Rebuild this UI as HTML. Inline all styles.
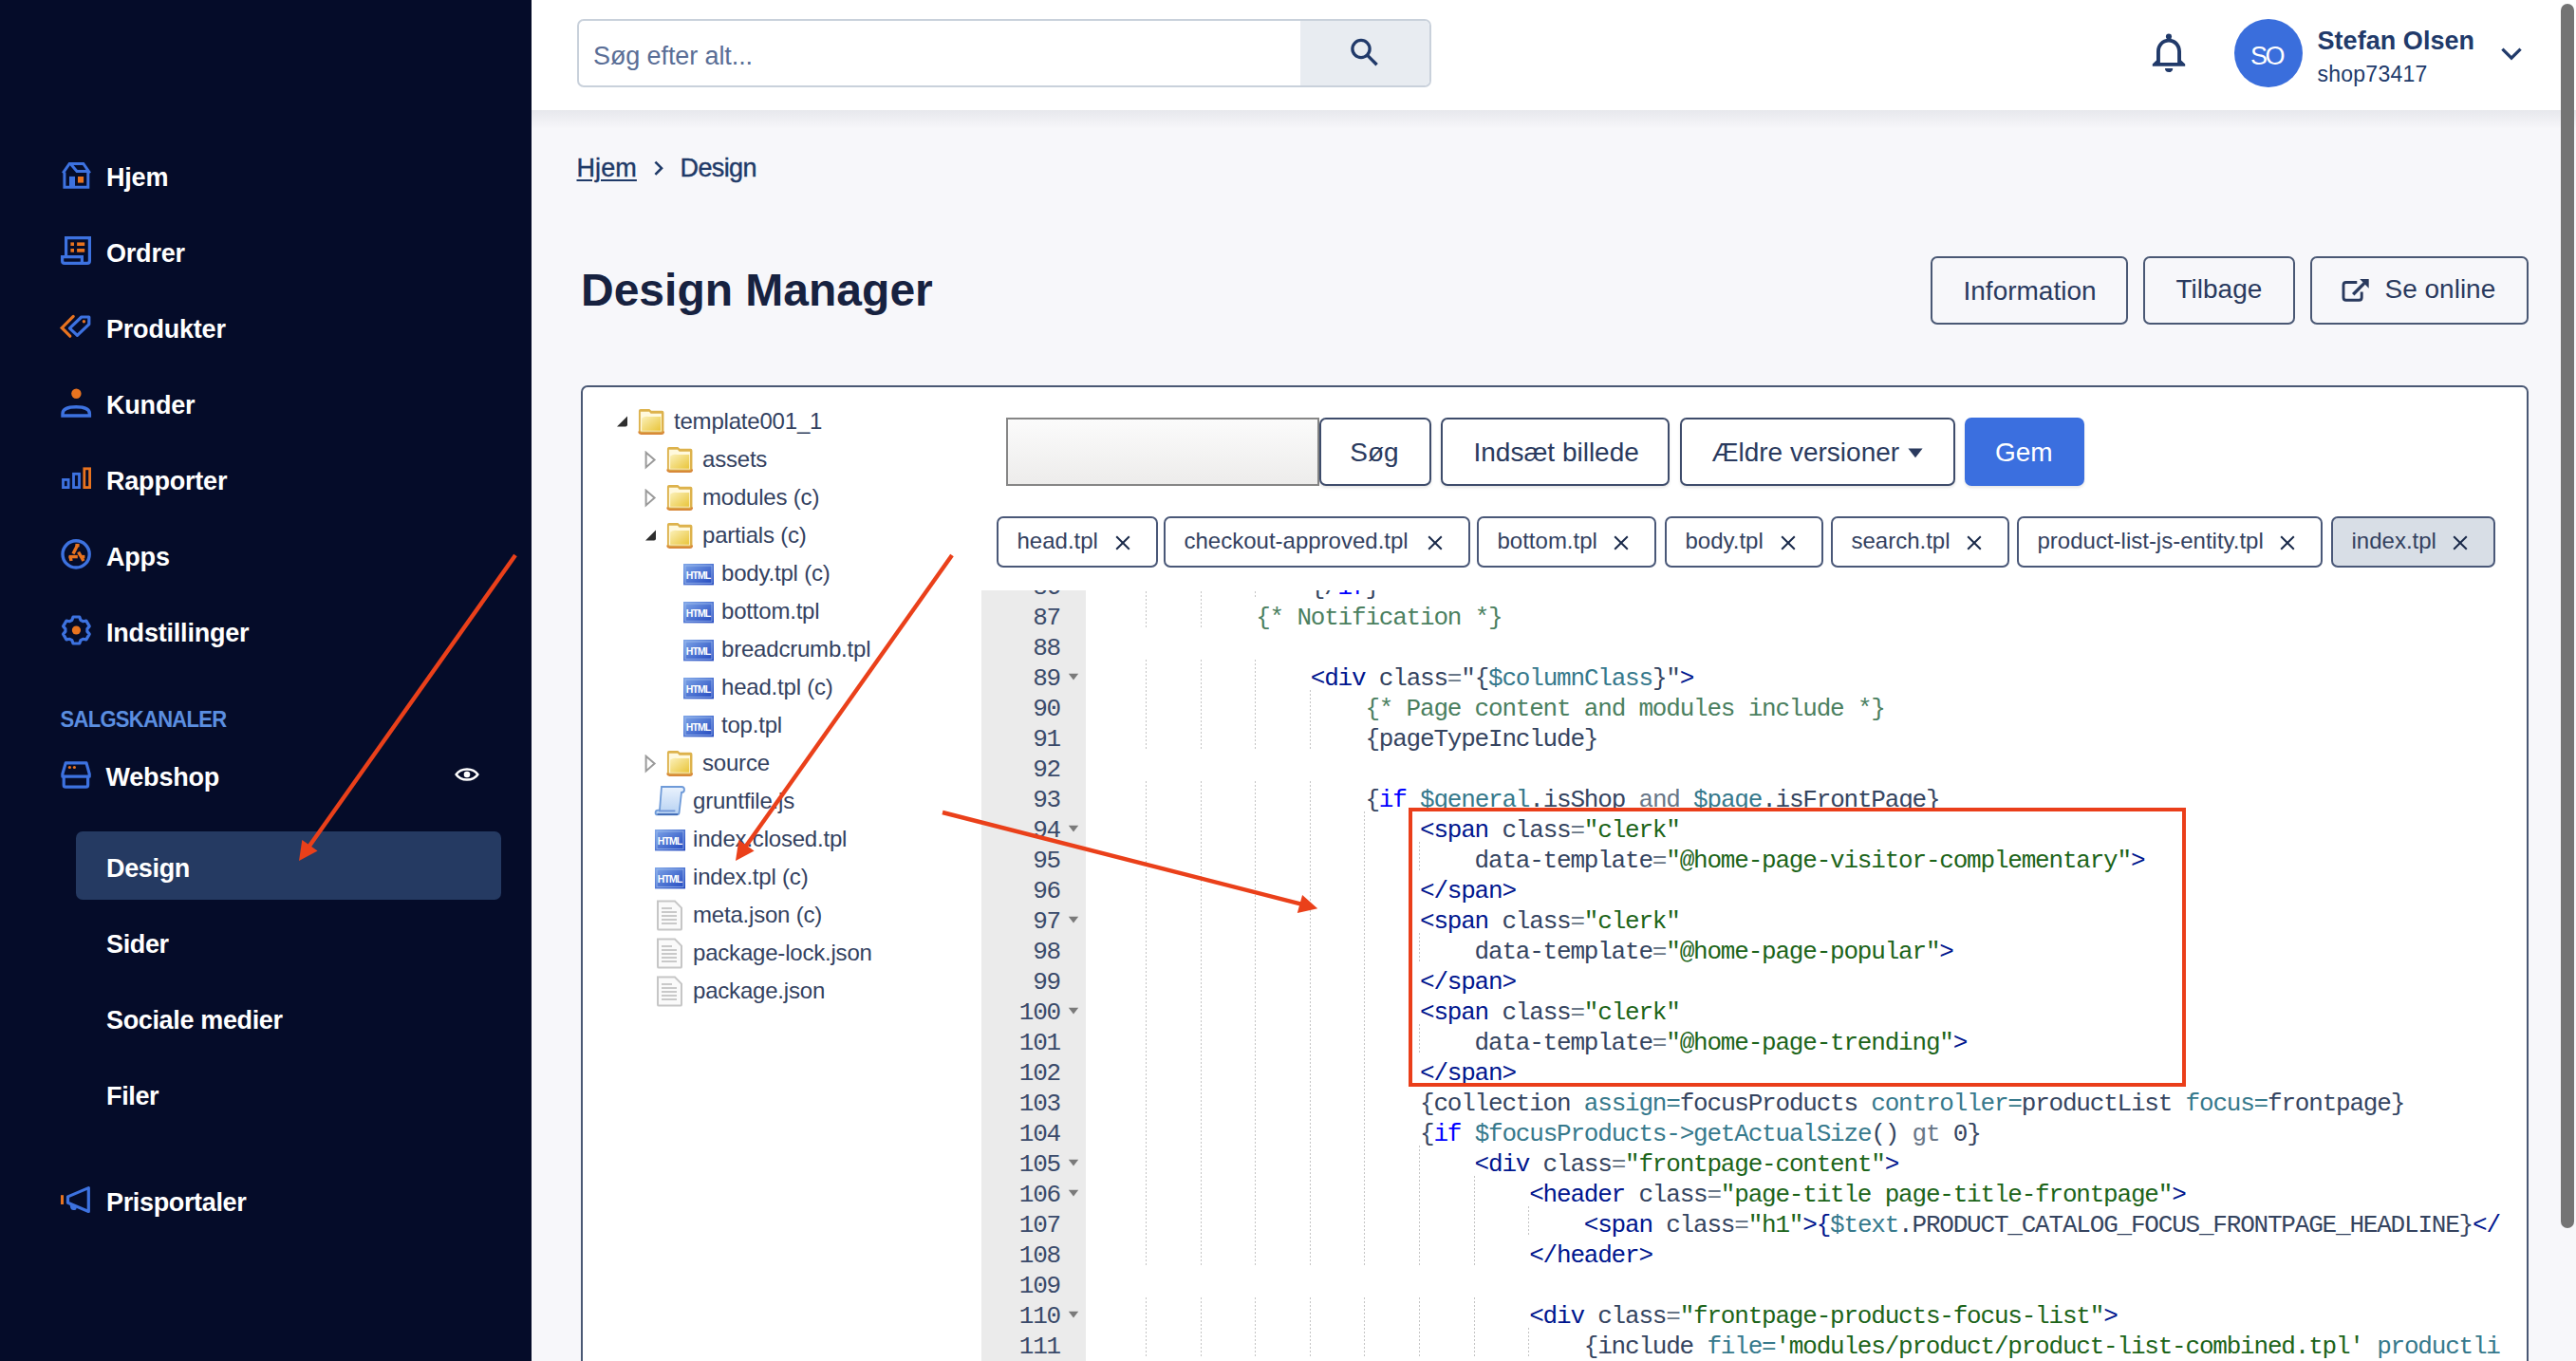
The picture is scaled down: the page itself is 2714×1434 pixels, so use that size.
<!DOCTYPE html>
<html><head><meta charset="utf-8"><style>
html,body{margin:0;padding:0;}
body{width:2714px;height:1434px;overflow:hidden;position:relative;background:#F7F7FA;}
.r{position:absolute;}
.t{position:absolute;white-space:pre;line-height:1;}
.cd{font-family:'Liberation Mono';font-size:26px;letter-spacing:-1.2px;}
.gn{right:27px;color:#3A4A6A;text-align:right;}
.g{position:absolute;width:1px;height:32px;background:repeating-linear-gradient(#C4C4C4 0 2px,transparent 2px 4px);}
</style></head><body>
<div class="r" style="left:0px;top:0px;width:560px;height:1434px;background:#050C29"></div>
<div class="t" style="left:112.0px;top:174px;font-family:'Liberation Sans';font-weight:bold;font-size:27px;color:#FFFFFF;letter-spacing:-0.2px;">Hjem</div>
<div class="t" style="left:112.0px;top:254px;font-family:'Liberation Sans';font-weight:bold;font-size:27px;color:#FFFFFF;letter-spacing:-0.2px;">Ordrer</div>
<div class="t" style="left:112.0px;top:334px;font-family:'Liberation Sans';font-weight:bold;font-size:27px;color:#FFFFFF;letter-spacing:-0.2px;">Produkter</div>
<div class="t" style="left:112.0px;top:414px;font-family:'Liberation Sans';font-weight:bold;font-size:27px;color:#FFFFFF;letter-spacing:-0.2px;">Kunder</div>
<div class="t" style="left:112.0px;top:494px;font-family:'Liberation Sans';font-weight:bold;font-size:27px;color:#FFFFFF;letter-spacing:-0.2px;">Rapporter</div>
<div class="t" style="left:112.0px;top:574px;font-family:'Liberation Sans';font-weight:bold;font-size:27px;color:#FFFFFF;letter-spacing:-0.2px;">Apps</div>
<div class="t" style="left:112.0px;top:654px;font-family:'Liberation Sans';font-weight:bold;font-size:27px;color:#FFFFFF;letter-spacing:-0.2px;">Indstillinger</div>
<div class="t" style="left:63.5px;top:748px;font-family:'Liberation Sans';font-weight:bold;font-size:22px;color:#5B8EE0;letter-spacing:-0.7px;transform:scaleY(1.12);transform-origin:0 18px;">SALGSKANALER</div>
<div class="t" style="left:111.5px;top:806px;font-family:'Liberation Sans';font-weight:bold;font-size:27px;color:#FFFFFF;letter-spacing:-0.2px;">Webshop</div>
<div class="r" style="left:80px;top:876px;width:448px;height:72px;background:#253A62;border-radius:7px"></div>
<div class="t" style="left:112.0px;top:902px;font-family:'Liberation Sans';font-weight:bold;font-size:27px;color:#FFFFFF;letter-spacing:-0.35px;">Design</div>
<div class="t" style="left:112.0px;top:982px;font-family:'Liberation Sans';font-weight:bold;font-size:27px;color:#FFFFFF;letter-spacing:-0.35px;">Sider</div>
<div class="t" style="left:112.0px;top:1062px;font-family:'Liberation Sans';font-weight:bold;font-size:27px;color:#FFFFFF;letter-spacing:-0.35px;">Sociale medier</div>
<div class="t" style="left:112.0px;top:1142px;font-family:'Liberation Sans';font-weight:bold;font-size:27px;color:#FFFFFF;letter-spacing:-0.35px;">Filer</div>
<div class="t" style="left:112.0px;top:1254px;font-family:'Liberation Sans';font-weight:bold;font-size:27px;color:#FFFFFF;letter-spacing:-0.35px;">Prisportaler</div>
<svg class="r" style="left:0;top:0" width="560" height="1434" viewBox="0 0 560 1434">
<g fill="none" stroke="#3D72E0" stroke-width="3">
 <path d="M67.9 181.6 V197.3 H92.8 V181.6"/>
 <path d="M66.3 182.4 L73.2 172.4 H87.8 L94.7 182.4" stroke-linejoin="miter"/>
 <path d="M74.4 172.8 L81 180.4 H93.6"/>
</g>
<rect x="73" y="185.9" width="6" height="12" fill="#3D72E0"/>
<rect x="82" y="186" width="6.1" height="6.6" fill="#E8731F"/>
<!-- Ordrer -->
<g fill="none" stroke="#3D72E0" stroke-width="3.2">
 <path d="M69.6 270 V250.6 H94.4 V275 Q94.4 277.4 92 277.4 H68 Q65.6 277.4 65.6 275 V270.6 H86.4 V277"/>
</g>
<g fill="#E8731F"><rect x="74.4" y="255.4" width="3.6" height="3.6"/><rect x="81.1" y="255.4" width="8.1" height="3.6"/><rect x="74.4" y="262" width="3.6" height="3.7"/><rect x="81.1" y="262" width="8.1" height="3.7"/></g>
<!-- Produkter -->
<path d="M77.2 333.4 L65.2 345.4 L73.8 354.2" fill="none" stroke="#E8731F" stroke-width="3.2" stroke-linecap="round"/>
<path d="M85.8 334 H93.8 V341.6 L81.4 353.4 L73.4 345.8 Z" fill="none" stroke="#3D72E0" stroke-width="3.2" stroke-linejoin="round"/>
<circle cx="88.4" cy="338.8" r="1.7" fill="#E8731F"/>
<!-- Kunder -->
<circle cx="80.4" cy="414.8" r="5.2" fill="#E8731F"/>
<path d="M66 438 V436 Q66 428.8 80.2 428.8 Q94.4 428.8 94.4 436 V438 Z" fill="none" stroke="#3D72E0" stroke-width="3.4"/>
<!-- Rapporter -->
<g fill="none" stroke-width="2.8">
 <rect x="66.5" y="505.4" width="5.6" height="8.2" stroke="#3D72E0"/>
 <rect x="77.5" y="499.3" width="6" height="14.3" stroke="#3D72E0"/>
 <rect x="88.8" y="493.8" width="5.8" height="19.8" stroke="#E8731F"/>
</g>
<!-- Apps -->
<circle cx="80.1" cy="583.9" r="14.1" fill="none" stroke="#3D72E0" stroke-width="3.4"/>
<g stroke="#E8731F" stroke-width="3.4" fill="none" stroke-linecap="butt">
 <path d="M81.6 574.4 L77 583.6"/><path d="M72.6 586.6 H81.8"/><path d="M82.6 581.6 L88 591"/>
 <path d="M79.4 574.6 L83.6 574.6"/><path d="M74 586 L75 591"/><path d="M86 586.6 H89.4"/>
</g>
<!-- Indstillinger -->
<path d="M75.87 653.32 L77.04 650.00 L83.76 650.00 L84.93 653.32 L87.38 654.74 L90.85 654.09 L94.21 659.91 L91.91 662.59 L91.91 665.41 L94.21 668.09 L90.85 673.91 L87.38 673.26 L84.93 674.68 L83.76 678.00 L77.04 678.00 L75.87 674.68 L73.42 673.26 L69.95 673.91 L66.59 668.09 L68.89 665.41 L68.89 662.59 L66.59 659.91 L69.95 654.09 L73.42 654.74 Z" fill="none" stroke="#3D72E0" stroke-width="3.2" stroke-linejoin="round"/>
<circle cx="80.4" cy="664" r="4.6" fill="#E8731F"/>
<!-- Webshop -->
<path d="M69.2 803.9 H91 L94.2 815.4 V818.2 H65.9 V815.4 Z" fill="none" stroke="#3D72E0" stroke-width="3.2" stroke-linejoin="round"/>
<path d="M67.2 818.2 V827.2 Q67.2 829.2 69.2 829.2 H90.6 Q92.6 829.2 92.6 827.2 V818.2" fill="none" stroke="#3D72E0" stroke-width="3.2"/>
<circle cx="73.4" cy="808.5" r="1.6" fill="#E8731F"/><circle cx="78.4" cy="808.5" r="1.6" fill="#E8731F"/>
<!-- Megaphone -->
<rect x="64" y="1259.2" width="3" height="9.8" fill="#E8731F"/>
<path d="M93.3 1251.6 V1276.5 L71.5 1267.2 V1260.9 Z" fill="none" stroke="#3D72E0" stroke-width="3.2" stroke-linejoin="round"/>
<path d="M73.4 1268 L74.2 1272.6 Q74.6 1275 77 1275 H78.8 Q80.6 1275 80.6 1273 V1270.8 Z" fill="#3D72E0"/>
<!-- eye -->
<path d="M480.6 816 C485.6 808.6 498.4 808.6 503.4 816 C498.4 823.4 485.6 823.4 480.6 816 Z" fill="none" stroke="#FFFFFF" stroke-width="2.4"/>
<circle cx="492" cy="816" r="3.3" fill="#FFFFFF"/>
</svg>
<div class="r" style="left:560px;top:0px;width:2154px;height:116px;background:#FFFFFF"></div>
<div class="r" style="left:560px;top:116px;width:2154px;height:20px;background:linear-gradient(rgba(20,30,60,0.07),rgba(20,30,60,0))"></div>
<div class="r" style="left:608px;top:20px;width:900px;height:72px;background:#fff;border:2px solid #C9D1DB;border-radius:7px;box-sizing:border-box"></div>
<div class="r" style="left:1370px;top:22px;width:136px;height:68px;background:#E8ECF1;border-radius:0 5px 5px 0"></div>
<div class="t" style="left:625.0px;top:46px;font-family:'Liberation Sans';font-weight:normal;font-size:27px;color:#5A6E96;letter-spacing:-0.1px;">Søg efter alt...</div>
<svg class="r" style="left:1400px;top:20px" width="80" height="72" viewBox="1400 20 80 72">
<circle cx="1434" cy="51.5" r="9.1" fill="none" stroke="#213A6A" stroke-width="3.3"/>
<path d="M1440.8 58.4 L1450.6 68.2" stroke="#213A6A" stroke-width="3.4" stroke-linecap="butt"/>
</svg>
<svg class="r" style="left:2260px;top:30px" width="50" height="52" viewBox="2260 30 50 52">
<path fill-rule="evenodd" fill="#213A6A" d="M2285 40.7 C2292.6 40.7 2298 46.6 2298 54.2 V63.4 L2302.2 67.6 V69.8 H2267.8 V67.6 L2272 63.4 V54.2 C2272 46.6 2277.4 40.7 2285 40.7 Z M2285 44.6 C2290.3 44.6 2294.1 48.8 2294.1 54.2 V65.9 H2275.9 V54.2 C2275.9 48.8 2279.7 44.6 2285 44.6 Z"/>
<circle cx="2285" cy="38.6" r="3.1" fill="#213A6A"/>
<path d="M2281 72 H2289.2 Q2289.2 76 2285.1 76 Q2281 76 2281 72 Z" fill="#213A6A"/>
</svg>
<div class="r" style="left:2354px;top:20px;width:72px;height:72px;border-radius:50%;background:#3A6EDC"></div>
<div class="t" style="left:2371.0px;top:46px;font-family:'Liberation Sans';font-weight:normal;font-size:27px;color:#FFFFFF;letter-spacing:-2.6px;">SO</div>
<div class="t" style="left:2441.5px;top:30px;font-family:'Liberation Sans';font-weight:bold;font-size:27px;color:#213A6A;letter-spacing:0.05px;">Stefan Olsen</div>
<div class="t" style="left:2441.5px;top:67px;font-family:'Liberation Sans';font-weight:normal;font-size:23px;color:#213A6A;letter-spacing:0.25px;">shop73417</div>
<svg class="r" style="left:2630px;top:44px" width="32" height="26" viewBox="2630 44 32 26">
<path d="M2636.4 51.6 L2646 61.2 L2655.6 51.6" fill="none" stroke="#213A6A" stroke-width="3.2"/>
</svg>
<div class="t" style="left:607.5px;top:164px;font-family:'Liberation Sans';font-weight:normal;font-size:27px;color:#1F3A68;letter-spacing:0.1px;-webkit-text-stroke:0.4px #1F3A68;text-decoration:underline;text-decoration-thickness:2px;text-underline-offset:3px;">Hjem</div>
<svg class="r" style="left:684px;top:164px" width="20" height="26" viewBox="684 164 20 26">
<path d="M690.4 170.6 L697 177.2 L690.4 183.8" fill="none" stroke="#1F3A68" stroke-width="2.6"/>
</svg>
<div class="t" style="left:716.5px;top:164px;font-family:'Liberation Sans';font-weight:normal;font-size:27px;color:#1F3A68;letter-spacing:-0.6px;-webkit-text-stroke:0.4px #1F3A68;">Design</div>
<div class="t" style="left:612.0px;top:282px;font-family:'Liberation Sans';font-weight:bold;font-size:48px;color:#172240;">Design Manager</div>
<div class="r" style="left:2034px;top:270px;width:208px;height:72px;background:transparent;border:2px solid #4A5874;border-radius:7px;box-sizing:border-box;"></div>
<div class="t" style="left:2068.5px;top:293px;font-family:'Liberation Sans';font-weight:normal;font-size:28px;color:#2A3A5E;">Information</div>
<div class="r" style="left:2258px;top:270px;width:160px;height:72px;background:transparent;border:2px solid #4A5874;border-radius:7px;box-sizing:border-box;"></div>
<div class="t" style="left:2292.5px;top:291px;font-family:'Liberation Sans';font-weight:normal;font-size:28px;color:#2A3A5E;">Tilbage</div>
<div class="r" style="left:2434px;top:270px;width:230px;height:72px;background:transparent;border:2px solid #4A5874;border-radius:7px;box-sizing:border-box;"></div>
<svg class="r" style="left:2460px;top:288px" width="40" height="36" viewBox="2460 288 40 36">
<path d="M2488.2 307.6 V313.4 Q2488.2 316.2 2485.4 316.2 H2471.8 Q2469 316.2 2469 313.4 V300.3 Q2469 297.5 2471.8 297.5 H2483.3" fill="none" stroke="#2A3A5E" stroke-width="2.9"/>
<path d="M2479.2 310.2 L2491 298.4" stroke="#2A3A5E" stroke-width="3.4"/>
<path d="M2486.2 294 H2495.7 V303.7 Z" fill="#2A3A5E"/>
</svg>
<div class="t" style="left:2512.5px;top:291px;font-family:'Liberation Sans';font-weight:normal;font-size:28px;color:#2A3A5E;">Se online</div>
<div class="r" style="left:612px;top:406px;width:2052px;height:1054px;background:#FFFFFF;border:2px solid #4A5874;border-radius:7px;box-sizing:border-box"></div>
<svg class="r" style="left:649px;top:436.5px" width="14" height="14" viewBox="0 0 14 14"><path d="M1 12.5 L12 1.5 V10.5 Q12 12.5 10 12.5 Z" fill="#2E2E2E"/></svg>
<svg class="r" style="left:672px;top:430px" width="28.4" height="28.4" viewBox="0 0 30 30">
<defs><linearGradient id="fg672430" x1="0" y1="0" x2="1" y2="1"><stop offset="0" stop-color="#FBF0B8"/><stop offset="1" stop-color="#E9C53A"/></linearGradient></defs>
<path d="M1 3 Q1 1 3 1 H13 L15 3 H27 Q29 3 29 5 V26 Q29 28.5 26.5 28.5 H3.5 Q1 28.5 1 26 Z" fill="#DDB24C"/>
<path d="M3 4 H12.6 L14.4 6 H26.4 V26 H3 Z" fill="#FFF9DD"/>
<path d="M4.4 11 Q8 8.6 12 9.6 H25.6 V25.2 H4.4 Z" fill="url(#fg672430)"/>
<path d="M1.4 26 Q1.4 28.4 3.6 28.4 H26.4 Q28.6 28.4 28.6 26" fill="none" stroke="#D8893A" stroke-width="2.2"/>
</svg>
<div class="t" style="left:710.0px;top:432px;font-family:'Liberation Sans';font-weight:normal;font-size:24px;color:#33415F;letter-spacing:-0.2px;">template001_1</div>
<svg class="r" style="left:679px;top:475px" width="14" height="20" viewBox="0 0 14 20"><path d="M1.6 1.8 L10.6 9.6 L1.6 17.4 Z" fill="none" stroke="#9A9A9A" stroke-width="2"/></svg>
<svg class="r" style="left:702px;top:470px" width="28.4" height="28.4" viewBox="0 0 30 30">
<defs><linearGradient id="fg702470" x1="0" y1="0" x2="1" y2="1"><stop offset="0" stop-color="#FBF0B8"/><stop offset="1" stop-color="#E9C53A"/></linearGradient></defs>
<path d="M1 3 Q1 1 3 1 H13 L15 3 H27 Q29 3 29 5 V26 Q29 28.5 26.5 28.5 H3.5 Q1 28.5 1 26 Z" fill="#DDB24C"/>
<path d="M3 4 H12.6 L14.4 6 H26.4 V26 H3 Z" fill="#FFF9DD"/>
<path d="M4.4 11 Q8 8.6 12 9.6 H25.6 V25.2 H4.4 Z" fill="url(#fg702470)"/>
<path d="M1.4 26 Q1.4 28.4 3.6 28.4 H26.4 Q28.6 28.4 28.6 26" fill="none" stroke="#D8893A" stroke-width="2.2"/>
</svg>
<div class="t" style="left:740.0px;top:472px;font-family:'Liberation Sans';font-weight:normal;font-size:24px;color:#33415F;letter-spacing:-0.2px;">assets</div>
<svg class="r" style="left:679px;top:515px" width="14" height="20" viewBox="0 0 14 20"><path d="M1.6 1.8 L10.6 9.6 L1.6 17.4 Z" fill="none" stroke="#9A9A9A" stroke-width="2"/></svg>
<svg class="r" style="left:702px;top:510px" width="28.4" height="28.4" viewBox="0 0 30 30">
<defs><linearGradient id="fg702510" x1="0" y1="0" x2="1" y2="1"><stop offset="0" stop-color="#FBF0B8"/><stop offset="1" stop-color="#E9C53A"/></linearGradient></defs>
<path d="M1 3 Q1 1 3 1 H13 L15 3 H27 Q29 3 29 5 V26 Q29 28.5 26.5 28.5 H3.5 Q1 28.5 1 26 Z" fill="#DDB24C"/>
<path d="M3 4 H12.6 L14.4 6 H26.4 V26 H3 Z" fill="#FFF9DD"/>
<path d="M4.4 11 Q8 8.6 12 9.6 H25.6 V25.2 H4.4 Z" fill="url(#fg702510)"/>
<path d="M1.4 26 Q1.4 28.4 3.6 28.4 H26.4 Q28.6 28.4 28.6 26" fill="none" stroke="#D8893A" stroke-width="2.2"/>
</svg>
<div class="t" style="left:740.0px;top:512px;font-family:'Liberation Sans';font-weight:normal;font-size:24px;color:#33415F;letter-spacing:-0.2px;">modules (c)</div>
<svg class="r" style="left:679px;top:556.5px" width="14" height="14" viewBox="0 0 14 14"><path d="M1 12.5 L12 1.5 V10.5 Q12 12.5 10 12.5 Z" fill="#2E2E2E"/></svg>
<svg class="r" style="left:702px;top:550px" width="28.4" height="28.4" viewBox="0 0 30 30">
<defs><linearGradient id="fg702550" x1="0" y1="0" x2="1" y2="1"><stop offset="0" stop-color="#FBF0B8"/><stop offset="1" stop-color="#E9C53A"/></linearGradient></defs>
<path d="M1 3 Q1 1 3 1 H13 L15 3 H27 Q29 3 29 5 V26 Q29 28.5 26.5 28.5 H3.5 Q1 28.5 1 26 Z" fill="#DDB24C"/>
<path d="M3 4 H12.6 L14.4 6 H26.4 V26 H3 Z" fill="#FFF9DD"/>
<path d="M4.4 11 Q8 8.6 12 9.6 H25.6 V25.2 H4.4 Z" fill="url(#fg702550)"/>
<path d="M1.4 26 Q1.4 28.4 3.6 28.4 H26.4 Q28.6 28.4 28.6 26" fill="none" stroke="#D8893A" stroke-width="2.2"/>
</svg>
<div class="t" style="left:740.0px;top:552px;font-family:'Liberation Sans';font-weight:normal;font-size:24px;color:#33415F;letter-spacing:-0.2px;">partials (c)</div>
<svg class="r" style="left:720px;top:594px" width="32" height="23" viewBox="0 0 32 23">
<defs><linearGradient id="hg720594" x1="0" y1="0" x2="1" y2="1"><stop offset="0" stop-color="#7FA6E8"/><stop offset="1" stop-color="#1F45BE"/></linearGradient></defs>
<rect x="0" y="0" width="32" height="22.4" fill="url(#hg720594)"/>
<rect x="2" y="2" width="28" height="18.4" fill="none" stroke="#A9C3F0" stroke-width="1" opacity="0.7"/>
<text x="15.6" y="16.2" text-anchor="middle" font-family="Liberation Sans" font-weight="bold" font-size="10.5" fill="#FFFFFF" letter-spacing="-0.9" transform="scale(1,1.05) translate(0,-0.8)">HTML</text>
</svg>
<div class="t" style="left:760.0px;top:592px;font-family:'Liberation Sans';font-weight:normal;font-size:24px;color:#33415F;letter-spacing:-0.2px;">body.tpl (c)</div>
<svg class="r" style="left:720px;top:634px" width="32" height="23" viewBox="0 0 32 23">
<defs><linearGradient id="hg720634" x1="0" y1="0" x2="1" y2="1"><stop offset="0" stop-color="#7FA6E8"/><stop offset="1" stop-color="#1F45BE"/></linearGradient></defs>
<rect x="0" y="0" width="32" height="22.4" fill="url(#hg720634)"/>
<rect x="2" y="2" width="28" height="18.4" fill="none" stroke="#A9C3F0" stroke-width="1" opacity="0.7"/>
<text x="15.6" y="16.2" text-anchor="middle" font-family="Liberation Sans" font-weight="bold" font-size="10.5" fill="#FFFFFF" letter-spacing="-0.9" transform="scale(1,1.05) translate(0,-0.8)">HTML</text>
</svg>
<div class="t" style="left:760.0px;top:632px;font-family:'Liberation Sans';font-weight:normal;font-size:24px;color:#33415F;letter-spacing:-0.2px;">bottom.tpl</div>
<svg class="r" style="left:720px;top:674px" width="32" height="23" viewBox="0 0 32 23">
<defs><linearGradient id="hg720674" x1="0" y1="0" x2="1" y2="1"><stop offset="0" stop-color="#7FA6E8"/><stop offset="1" stop-color="#1F45BE"/></linearGradient></defs>
<rect x="0" y="0" width="32" height="22.4" fill="url(#hg720674)"/>
<rect x="2" y="2" width="28" height="18.4" fill="none" stroke="#A9C3F0" stroke-width="1" opacity="0.7"/>
<text x="15.6" y="16.2" text-anchor="middle" font-family="Liberation Sans" font-weight="bold" font-size="10.5" fill="#FFFFFF" letter-spacing="-0.9" transform="scale(1,1.05) translate(0,-0.8)">HTML</text>
</svg>
<div class="t" style="left:760.0px;top:672px;font-family:'Liberation Sans';font-weight:normal;font-size:24px;color:#33415F;letter-spacing:-0.2px;">breadcrumb.tpl</div>
<svg class="r" style="left:720px;top:714px" width="32" height="23" viewBox="0 0 32 23">
<defs><linearGradient id="hg720714" x1="0" y1="0" x2="1" y2="1"><stop offset="0" stop-color="#7FA6E8"/><stop offset="1" stop-color="#1F45BE"/></linearGradient></defs>
<rect x="0" y="0" width="32" height="22.4" fill="url(#hg720714)"/>
<rect x="2" y="2" width="28" height="18.4" fill="none" stroke="#A9C3F0" stroke-width="1" opacity="0.7"/>
<text x="15.6" y="16.2" text-anchor="middle" font-family="Liberation Sans" font-weight="bold" font-size="10.5" fill="#FFFFFF" letter-spacing="-0.9" transform="scale(1,1.05) translate(0,-0.8)">HTML</text>
</svg>
<div class="t" style="left:760.0px;top:712px;font-family:'Liberation Sans';font-weight:normal;font-size:24px;color:#33415F;letter-spacing:-0.2px;">head.tpl (c)</div>
<svg class="r" style="left:720px;top:754px" width="32" height="23" viewBox="0 0 32 23">
<defs><linearGradient id="hg720754" x1="0" y1="0" x2="1" y2="1"><stop offset="0" stop-color="#7FA6E8"/><stop offset="1" stop-color="#1F45BE"/></linearGradient></defs>
<rect x="0" y="0" width="32" height="22.4" fill="url(#hg720754)"/>
<rect x="2" y="2" width="28" height="18.4" fill="none" stroke="#A9C3F0" stroke-width="1" opacity="0.7"/>
<text x="15.6" y="16.2" text-anchor="middle" font-family="Liberation Sans" font-weight="bold" font-size="10.5" fill="#FFFFFF" letter-spacing="-0.9" transform="scale(1,1.05) translate(0,-0.8)">HTML</text>
</svg>
<div class="t" style="left:760.0px;top:752px;font-family:'Liberation Sans';font-weight:normal;font-size:24px;color:#33415F;letter-spacing:-0.2px;">top.tpl</div>
<svg class="r" style="left:679px;top:795px" width="14" height="20" viewBox="0 0 14 20"><path d="M1.6 1.8 L10.6 9.6 L1.6 17.4 Z" fill="none" stroke="#9A9A9A" stroke-width="2"/></svg>
<svg class="r" style="left:702px;top:790px" width="28.4" height="28.4" viewBox="0 0 30 30">
<defs><linearGradient id="fg702790" x1="0" y1="0" x2="1" y2="1"><stop offset="0" stop-color="#FBF0B8"/><stop offset="1" stop-color="#E9C53A"/></linearGradient></defs>
<path d="M1 3 Q1 1 3 1 H13 L15 3 H27 Q29 3 29 5 V26 Q29 28.5 26.5 28.5 H3.5 Q1 28.5 1 26 Z" fill="#DDB24C"/>
<path d="M3 4 H12.6 L14.4 6 H26.4 V26 H3 Z" fill="#FFF9DD"/>
<path d="M4.4 11 Q8 8.6 12 9.6 H25.6 V25.2 H4.4 Z" fill="url(#fg702790)"/>
<path d="M1.4 26 Q1.4 28.4 3.6 28.4 H26.4 Q28.6 28.4 28.6 26" fill="none" stroke="#D8893A" stroke-width="2.2"/>
</svg>
<div class="t" style="left:740.0px;top:792px;font-family:'Liberation Sans';font-weight:normal;font-size:24px;color:#33415F;letter-spacing:-0.2px;">source</div>
<svg class="r" style="left:689px;top:827px" width="34" height="34" viewBox="0 0 34 34">
<defs><linearGradient id="jg" x1="0" y1="0" x2="0" y2="1"><stop offset="0" stop-color="#EAF2FD"/><stop offset="1" stop-color="#B6D1F2"/></linearGradient></defs>
<path d="M8 2 H29 Q32 2 32 5 Q32 8 29 8 L26.6 29 Q26.4 31.4 24 31.4 H3.6 Q1.4 31.4 1.6 29 Q1.8 26.6 4.2 26.6 H6 Z" fill="url(#jg)" stroke="#6E9AD8" stroke-width="1.8"/>
<path d="M5 27.4 H22.4" stroke="#6E95D6" stroke-width="1.8"/>
<path d="M3.6 31 H25" stroke="#2F58A8" stroke-width="1.4"/>
</svg>
<div class="t" style="left:730.0px;top:832px;font-family:'Liberation Sans';font-weight:normal;font-size:24px;color:#33415F;letter-spacing:-0.2px;">gruntfile.js</div>
<svg class="r" style="left:690px;top:873.5px" width="32" height="23" viewBox="0 0 32 23">
<defs><linearGradient id="hg690873.5" x1="0" y1="0" x2="1" y2="1"><stop offset="0" stop-color="#7FA6E8"/><stop offset="1" stop-color="#1F45BE"/></linearGradient></defs>
<rect x="0" y="0" width="32" height="22.4" fill="url(#hg690873.5)"/>
<rect x="2" y="2" width="28" height="18.4" fill="none" stroke="#A9C3F0" stroke-width="1" opacity="0.7"/>
<text x="15.6" y="16.2" text-anchor="middle" font-family="Liberation Sans" font-weight="bold" font-size="10.5" fill="#FFFFFF" letter-spacing="-0.9" transform="scale(1,1.05) translate(0,-0.8)">HTML</text>
</svg>
<div class="t" style="left:730.0px;top:872px;font-family:'Liberation Sans';font-weight:normal;font-size:24px;color:#33415F;letter-spacing:-0.2px;">index.closed.tpl</div>
<svg class="r" style="left:690px;top:913.5px" width="32" height="23" viewBox="0 0 32 23">
<defs><linearGradient id="hg690913.5" x1="0" y1="0" x2="1" y2="1"><stop offset="0" stop-color="#7FA6E8"/><stop offset="1" stop-color="#1F45BE"/></linearGradient></defs>
<rect x="0" y="0" width="32" height="22.4" fill="url(#hg690913.5)"/>
<rect x="2" y="2" width="28" height="18.4" fill="none" stroke="#A9C3F0" stroke-width="1" opacity="0.7"/>
<text x="15.6" y="16.2" text-anchor="middle" font-family="Liberation Sans" font-weight="bold" font-size="10.5" fill="#FFFFFF" letter-spacing="-0.9" transform="scale(1,1.05) translate(0,-0.8)">HTML</text>
</svg>
<div class="t" style="left:730.0px;top:912px;font-family:'Liberation Sans';font-weight:normal;font-size:24px;color:#33415F;letter-spacing:-0.2px;">index.tpl (c)</div>
<svg class="r" style="left:690.5px;top:947.5px" width="30" height="33" viewBox="0 0 30 33">
<path d="M2 1.6 H20 L27 8.6 V30.4 Q27 31.6 25.8 31.6 H3.2 Q2 31.6 2 30.4 Z" fill="#FAFAFA" stroke="#C6C6C6" stroke-width="2"/>
<g stroke="#BDBDBD" stroke-width="1.6"><path d="M6 9 H17"/><path d="M6 13 H22"/><path d="M6 17 H22"/><path d="M6 21 H22"/><path d="M6 25 H22"/></g>
</svg>
<div class="t" style="left:730.0px;top:952px;font-family:'Liberation Sans';font-weight:normal;font-size:24px;color:#33415F;letter-spacing:-0.2px;">meta.json (c)</div>
<svg class="r" style="left:690.5px;top:987.5px" width="30" height="33" viewBox="0 0 30 33">
<path d="M2 1.6 H20 L27 8.6 V30.4 Q27 31.6 25.8 31.6 H3.2 Q2 31.6 2 30.4 Z" fill="#FAFAFA" stroke="#C6C6C6" stroke-width="2"/>
<g stroke="#BDBDBD" stroke-width="1.6"><path d="M6 9 H17"/><path d="M6 13 H22"/><path d="M6 17 H22"/><path d="M6 21 H22"/><path d="M6 25 H22"/></g>
</svg>
<div class="t" style="left:730.0px;top:992px;font-family:'Liberation Sans';font-weight:normal;font-size:24px;color:#33415F;letter-spacing:-0.2px;">package-lock.json</div>
<svg class="r" style="left:690.5px;top:1027.5px" width="30" height="33" viewBox="0 0 30 33">
<path d="M2 1.6 H20 L27 8.6 V30.4 Q27 31.6 25.8 31.6 H3.2 Q2 31.6 2 30.4 Z" fill="#FAFAFA" stroke="#C6C6C6" stroke-width="2"/>
<g stroke="#BDBDBD" stroke-width="1.6"><path d="M6 9 H17"/><path d="M6 13 H22"/><path d="M6 17 H22"/><path d="M6 21 H22"/><path d="M6 25 H22"/></g>
</svg>
<div class="t" style="left:730.0px;top:1032px;font-family:'Liberation Sans';font-weight:normal;font-size:24px;color:#33415F;letter-spacing:-0.2px;">package.json</div>
<div class="r" style="left:1060px;top:440px;width:330px;height:72px;background:linear-gradient(#FBFBFB,#EDECEB);border:2px solid #868686;box-sizing:border-box"></div>
<div class="r" style="left:1390px;top:440px;width:118px;height:72px;background:#FFFFFF;border:2px solid #3E4C6B;border-radius:7px;box-sizing:border-box;box-shadow:0 2px 3px rgba(0,0,0,0.10);"></div>
<div class="t" style="left:1422.3px;top:463px;font-family:'Liberation Sans';font-weight:normal;font-size:28px;color:#2A3A5E;">Søg</div>
<div class="r" style="left:1518px;top:440px;width:241px;height:72px;background:#FFFFFF;border:2px solid #3E4C6B;border-radius:7px;box-sizing:border-box;box-shadow:0 2px 3px rgba(0,0,0,0.10);"></div>
<div class="t" style="left:1552.5px;top:463px;font-family:'Liberation Sans';font-weight:normal;font-size:28px;color:#2A3A5E;">Indsæt billede</div>
<div class="r" style="left:1770px;top:440px;width:290px;height:72px;background:#FFFFFF;border:2px solid #3E4C6B;border-radius:7px;box-sizing:border-box;box-shadow:0 2px 3px rgba(0,0,0,0.10);"></div>
<div class="t" style="left:1803.5px;top:463px;font-family:'Liberation Sans';font-weight:normal;font-size:28px;color:#2A3A5E;">Ældre versioner</div>
<svg class="r" style="left:2008px;top:470px" width="20" height="14" viewBox="0 0 20 14"><path d="M2.4 2.6 H17.6 L10 12.2 Z" fill="#2A3A5E"/></svg>
<div class="r" style="left:2070px;top:440px;width:126px;height:72px;background:#3B6FDF;border:2px solid #3B6FDF;border-radius:7px;box-sizing:border-box;box-shadow:0 2px 3px rgba(0,0,0,0.10);"></div>
<div class="t" style="left:2102.0px;top:463px;font-family:'Liberation Sans';font-weight:normal;font-size:28px;color:#FFFFFF;">Gem</div>
<div class="r" style="left:1050px;top:544px;width:170px;height:54px;background:#FFFFFF;border:2px solid #4A5878;border-radius:7px;box-sizing:border-box"></div>
<div class="t" style="left:1071.5px;top:558px;font-family:'Liberation Sans';font-weight:normal;font-size:24px;color:#33415F;">head.tpl</div>
<svg class="r" style="left:1174px;top:563px" width="18" height="18" viewBox="0 0 18 18"><path d="M2.2 2.2 L15.8 15.8 M15.8 2.2 L2.2 15.8" stroke="#1A2A4A" stroke-width="2"/></svg>
<div class="r" style="left:1226px;top:544px;width:323px;height:54px;background:#FFFFFF;border:2px solid #4A5878;border-radius:7px;box-sizing:border-box"></div>
<div class="t" style="left:1247.5px;top:558px;font-family:'Liberation Sans';font-weight:normal;font-size:24px;color:#33415F;">checkout-approved.tpl</div>
<svg class="r" style="left:1503px;top:563px" width="18" height="18" viewBox="0 0 18 18"><path d="M2.2 2.2 L15.8 15.8 M15.8 2.2 L2.2 15.8" stroke="#1A2A4A" stroke-width="2"/></svg>
<div class="r" style="left:1556px;top:544px;width:189px;height:54px;background:#FFFFFF;border:2px solid #4A5878;border-radius:7px;box-sizing:border-box"></div>
<div class="t" style="left:1577.5px;top:558px;font-family:'Liberation Sans';font-weight:normal;font-size:24px;color:#33415F;">bottom.tpl</div>
<svg class="r" style="left:1699px;top:563px" width="18" height="18" viewBox="0 0 18 18"><path d="M2.2 2.2 L15.8 15.8 M15.8 2.2 L2.2 15.8" stroke="#1A2A4A" stroke-width="2"/></svg>
<div class="r" style="left:1754px;top:544px;width:167px;height:54px;background:#FFFFFF;border:2px solid #4A5878;border-radius:7px;box-sizing:border-box"></div>
<div class="t" style="left:1775.5px;top:558px;font-family:'Liberation Sans';font-weight:normal;font-size:24px;color:#33415F;">body.tpl</div>
<svg class="r" style="left:1875px;top:563px" width="18" height="18" viewBox="0 0 18 18"><path d="M2.2 2.2 L15.8 15.8 M15.8 2.2 L2.2 15.8" stroke="#1A2A4A" stroke-width="2"/></svg>
<div class="r" style="left:1929px;top:544px;width:188px;height:54px;background:#FFFFFF;border:2px solid #4A5878;border-radius:7px;box-sizing:border-box"></div>
<div class="t" style="left:1950.5px;top:558px;font-family:'Liberation Sans';font-weight:normal;font-size:24px;color:#33415F;">search.tpl</div>
<svg class="r" style="left:2071px;top:563px" width="18" height="18" viewBox="0 0 18 18"><path d="M2.2 2.2 L15.8 15.8 M15.8 2.2 L2.2 15.8" stroke="#1A2A4A" stroke-width="2"/></svg>
<div class="r" style="left:2125px;top:544px;width:322px;height:54px;background:#FFFFFF;border:2px solid #4A5878;border-radius:7px;box-sizing:border-box"></div>
<div class="t" style="left:2146.5px;top:558px;font-family:'Liberation Sans';font-weight:normal;font-size:24px;color:#33415F;">product-list-js-entity.tpl</div>
<svg class="r" style="left:2401px;top:563px" width="18" height="18" viewBox="0 0 18 18"><path d="M2.2 2.2 L15.8 15.8 M15.8 2.2 L2.2 15.8" stroke="#1A2A4A" stroke-width="2"/></svg>
<div class="r" style="left:2456px;top:544px;width:173px;height:54px;background:#D8DEE6;border:2px solid #4A5878;border-radius:7px;box-sizing:border-box"></div>
<div class="t" style="left:2477.5px;top:558px;font-family:'Liberation Sans';font-weight:normal;font-size:24px;color:#33415F;">index.tpl</div>
<svg class="r" style="left:2583px;top:563px" width="18" height="18" viewBox="0 0 18 18"><path d="M2.2 2.2 L15.8 15.8 M15.8 2.2 L2.2 15.8" stroke="#1A2A4A" stroke-width="2"/></svg>
<div class="r" style="left:1034px;top:622px;width:110px;height:812px;background:#EBEBEB"></div>
<div class="r" style="left:1144px;top:622px;width:1494px;height:812px;overflow:hidden">
<div class="g" style="left:63px;top:-23px"></div>
<div class="g" style="left:121px;top:-23px"></div>
<div class="g" style="left:178px;top:-23px"></div>
<div class="g" style="left:63px;top:9px"></div>
<div class="g" style="left:121px;top:9px"></div>
<div class="g" style="left:63px;top:73px"></div>
<div class="g" style="left:121px;top:73px"></div>
<div class="g" style="left:178px;top:73px"></div>
<div class="g" style="left:63px;top:105px"></div>
<div class="g" style="left:121px;top:105px"></div>
<div class="g" style="left:178px;top:105px"></div>
<div class="g" style="left:236px;top:105px"></div>
<div class="g" style="left:63px;top:137px"></div>
<div class="g" style="left:121px;top:137px"></div>
<div class="g" style="left:178px;top:137px"></div>
<div class="g" style="left:236px;top:137px"></div>
<div class="g" style="left:63px;top:201px"></div>
<div class="g" style="left:121px;top:201px"></div>
<div class="g" style="left:178px;top:201px"></div>
<div class="g" style="left:236px;top:201px"></div>
<div class="g" style="left:63px;top:233px"></div>
<div class="g" style="left:121px;top:233px"></div>
<div class="g" style="left:178px;top:233px"></div>
<div class="g" style="left:236px;top:233px"></div>
<div class="g" style="left:293px;top:233px"></div>
<div class="g" style="left:63px;top:265px"></div>
<div class="g" style="left:121px;top:265px"></div>
<div class="g" style="left:178px;top:265px"></div>
<div class="g" style="left:236px;top:265px"></div>
<div class="g" style="left:293px;top:265px"></div>
<div class="g" style="left:351px;top:265px"></div>
<div class="g" style="left:63px;top:297px"></div>
<div class="g" style="left:121px;top:297px"></div>
<div class="g" style="left:178px;top:297px"></div>
<div class="g" style="left:236px;top:297px"></div>
<div class="g" style="left:293px;top:297px"></div>
<div class="g" style="left:63px;top:329px"></div>
<div class="g" style="left:121px;top:329px"></div>
<div class="g" style="left:178px;top:329px"></div>
<div class="g" style="left:236px;top:329px"></div>
<div class="g" style="left:293px;top:329px"></div>
<div class="g" style="left:63px;top:361px"></div>
<div class="g" style="left:121px;top:361px"></div>
<div class="g" style="left:178px;top:361px"></div>
<div class="g" style="left:236px;top:361px"></div>
<div class="g" style="left:293px;top:361px"></div>
<div class="g" style="left:351px;top:361px"></div>
<div class="g" style="left:63px;top:393px"></div>
<div class="g" style="left:121px;top:393px"></div>
<div class="g" style="left:178px;top:393px"></div>
<div class="g" style="left:236px;top:393px"></div>
<div class="g" style="left:293px;top:393px"></div>
<div class="g" style="left:63px;top:425px"></div>
<div class="g" style="left:121px;top:425px"></div>
<div class="g" style="left:178px;top:425px"></div>
<div class="g" style="left:236px;top:425px"></div>
<div class="g" style="left:293px;top:425px"></div>
<div class="g" style="left:63px;top:457px"></div>
<div class="g" style="left:121px;top:457px"></div>
<div class="g" style="left:178px;top:457px"></div>
<div class="g" style="left:236px;top:457px"></div>
<div class="g" style="left:293px;top:457px"></div>
<div class="g" style="left:351px;top:457px"></div>
<div class="g" style="left:63px;top:489px"></div>
<div class="g" style="left:121px;top:489px"></div>
<div class="g" style="left:178px;top:489px"></div>
<div class="g" style="left:236px;top:489px"></div>
<div class="g" style="left:293px;top:489px"></div>
<div class="g" style="left:63px;top:521px"></div>
<div class="g" style="left:121px;top:521px"></div>
<div class="g" style="left:178px;top:521px"></div>
<div class="g" style="left:236px;top:521px"></div>
<div class="g" style="left:293px;top:521px"></div>
<div class="g" style="left:63px;top:553px"></div>
<div class="g" style="left:121px;top:553px"></div>
<div class="g" style="left:178px;top:553px"></div>
<div class="g" style="left:236px;top:553px"></div>
<div class="g" style="left:293px;top:553px"></div>
<div class="g" style="left:63px;top:585px"></div>
<div class="g" style="left:121px;top:585px"></div>
<div class="g" style="left:178px;top:585px"></div>
<div class="g" style="left:236px;top:585px"></div>
<div class="g" style="left:293px;top:585px"></div>
<div class="g" style="left:351px;top:585px"></div>
<div class="g" style="left:63px;top:617px"></div>
<div class="g" style="left:121px;top:617px"></div>
<div class="g" style="left:178px;top:617px"></div>
<div class="g" style="left:236px;top:617px"></div>
<div class="g" style="left:293px;top:617px"></div>
<div class="g" style="left:351px;top:617px"></div>
<div class="g" style="left:409px;top:617px"></div>
<div class="g" style="left:63px;top:649px"></div>
<div class="g" style="left:121px;top:649px"></div>
<div class="g" style="left:178px;top:649px"></div>
<div class="g" style="left:236px;top:649px"></div>
<div class="g" style="left:293px;top:649px"></div>
<div class="g" style="left:351px;top:649px"></div>
<div class="g" style="left:409px;top:649px"></div>
<div class="g" style="left:466px;top:649px"></div>
<div class="g" style="left:63px;top:681px"></div>
<div class="g" style="left:121px;top:681px"></div>
<div class="g" style="left:178px;top:681px"></div>
<div class="g" style="left:236px;top:681px"></div>
<div class="g" style="left:293px;top:681px"></div>
<div class="g" style="left:351px;top:681px"></div>
<div class="g" style="left:409px;top:681px"></div>
<div class="g" style="left:63px;top:745px"></div>
<div class="g" style="left:121px;top:745px"></div>
<div class="g" style="left:178px;top:745px"></div>
<div class="g" style="left:236px;top:745px"></div>
<div class="g" style="left:293px;top:745px"></div>
<div class="g" style="left:351px;top:745px"></div>
<div class="g" style="left:409px;top:745px"></div>
<div class="g" style="left:63px;top:777px"></div>
<div class="g" style="left:121px;top:777px"></div>
<div class="g" style="left:178px;top:777px"></div>
<div class="g" style="left:236px;top:777px"></div>
<div class="g" style="left:293px;top:777px"></div>
<div class="g" style="left:351px;top:777px"></div>
<div class="g" style="left:409px;top:777px"></div>
<div class="g" style="left:466px;top:777px"></div>
<div class="t cd" style="left:236.80px;top:-16px"><span style="color:#35445F">{/</span><span style="color:#0000FF">if</span><span style="color:#35445F">}</span></div>
<div class="t cd" style="left:179.20px;top:16px"><span style="color:#4B7F5F">{* Notification *}</span></div>
<div class="t cd" style="left:236.80px;top:80px"><span style="color:#00168E">&lt;div</span><span style="color:#35445F"> class</span><span style="color:#687687">=</span><span style="color:#35445F">"{</span><span style="color:#36798C">$columnClass</span><span style="color:#35445F">}"</span><span style="color:#00168E">&gt;</span></div>
<div class="t cd" style="left:294.40px;top:112px"><span style="color:#4B7F5F">{* Page content and modules include *}</span></div>
<div class="t cd" style="left:294.40px;top:144px"><span style="color:#35445F">{pageTypeInclude}</span></div>
<div class="t cd" style="left:294.40px;top:208px"><span style="color:#35445F">{</span><span style="color:#0000FF">if</span><span style="color:#35445F"> </span><span style="color:#36798C">$general</span><span style="color:#35445F">.isShop </span><span style="color:#687687">and</span><span style="color:#35445F"> </span><span style="color:#36798C">$page</span><span style="color:#35445F">.isFrontPage}</span></div>
<div class="t cd" style="left:352.00px;top:240px"><span style="color:#00168E">&lt;span</span><span style="color:#35445F"> class</span><span style="color:#687687">=</span><span style="color:#1C6419">"clerk"</span></div>
<div class="t cd" style="left:409.60px;top:272px"><span style="color:#35445F">data-template</span><span style="color:#687687">=</span><span style="color:#1C6419">"@home-page-visitor-complementary"</span><span style="color:#00168E">&gt;</span></div>
<div class="t cd" style="left:352.00px;top:304px"><span style="color:#00168E">&lt;/span&gt;</span></div>
<div class="t cd" style="left:352.00px;top:336px"><span style="color:#00168E">&lt;span</span><span style="color:#35445F"> class</span><span style="color:#687687">=</span><span style="color:#1C6419">"clerk"</span></div>
<div class="t cd" style="left:409.60px;top:368px"><span style="color:#35445F">data-template</span><span style="color:#687687">=</span><span style="color:#1C6419">"@home-page-popular"</span><span style="color:#00168E">&gt;</span></div>
<div class="t cd" style="left:352.00px;top:400px"><span style="color:#00168E">&lt;/span&gt;</span></div>
<div class="t cd" style="left:352.00px;top:432px"><span style="color:#00168E">&lt;span</span><span style="color:#35445F"> class</span><span style="color:#687687">=</span><span style="color:#1C6419">"clerk"</span></div>
<div class="t cd" style="left:409.60px;top:464px"><span style="color:#35445F">data-template</span><span style="color:#687687">=</span><span style="color:#1C6419">"@home-page-trending"</span><span style="color:#00168E">&gt;</span></div>
<div class="t cd" style="left:352.00px;top:496px"><span style="color:#00168E">&lt;/span&gt;</span></div>
<div class="t cd" style="left:352.00px;top:528px"><span style="color:#35445F">{collection </span><span style="color:#36798C">assign=</span><span style="color:#35445F">focusProducts </span><span style="color:#36798C">controller=</span><span style="color:#35445F">productList </span><span style="color:#36798C">focus=</span><span style="color:#35445F">frontpage}</span></div>
<div class="t cd" style="left:352.00px;top:560px"><span style="color:#35445F">{</span><span style="color:#0000FF">if</span><span style="color:#35445F"> </span><span style="color:#36798C">$focusProducts-&gt;getActualSize</span><span style="color:#35445F">() </span><span style="color:#687687">gt</span><span style="color:#35445F"> 0}</span></div>
<div class="t cd" style="left:409.60px;top:592px"><span style="color:#00168E">&lt;div</span><span style="color:#35445F"> class</span><span style="color:#687687">=</span><span style="color:#1C6419">"frontpage-content"</span><span style="color:#00168E">&gt;</span></div>
<div class="t cd" style="left:467.20px;top:624px"><span style="color:#00168E">&lt;header</span><span style="color:#35445F"> class</span><span style="color:#687687">=</span><span style="color:#1C6419">"page-title page-title-frontpage"</span><span style="color:#00168E">&gt;</span></div>
<div class="t cd" style="left:524.80px;top:656px"><span style="color:#00168E">&lt;span</span><span style="color:#35445F"> class</span><span style="color:#687687">=</span><span style="color:#1C6419">"h1"</span><span style="color:#00168E">&gt;{</span><span style="color:#36798C">$text</span><span style="color:#35445F">.PRODUCT_CATALOG_FOCUS_FRONTPAGE_HEADLINE}</span><span style="color:#00168E">&lt;/</span></div>
<div class="t cd" style="left:467.20px;top:688px"><span style="color:#00168E">&lt;/header&gt;</span></div>
<div class="t cd" style="left:467.20px;top:752px"><span style="color:#00168E">&lt;div</span><span style="color:#35445F"> class</span><span style="color:#687687">=</span><span style="color:#1C6419">"frontpage-products-focus-list"</span><span style="color:#00168E">&gt;</span></div>
<div class="t cd" style="left:524.80px;top:784px"><span style="color:#35445F">{include </span><span style="color:#36798C">file=</span><span style="color:#1C6419">'modules/product/product-list-combined.tpl'</span><span style="color:#36798C"> productli</span></div>
</div>
<div class="r" style="left:1034px;top:622px;width:110px;height:812px;overflow:hidden">
<div class="t cd gn" style="top:-16px">86</div>
<div class="t cd gn" style="top:16px">87</div>
<div class="t cd gn" style="top:48px">88</div>
<div class="t cd gn" style="top:80px">89</div>
<svg class="r" style="left:91px;top:87px" width="12" height="8" viewBox="0 0 12 8"><path d="M0.8 0.8 H11.2 L6 7.4 Z" fill="#7A7A7A"/></svg>
<div class="t cd gn" style="top:112px">90</div>
<div class="t cd gn" style="top:144px">91</div>
<div class="t cd gn" style="top:176px">92</div>
<div class="t cd gn" style="top:208px">93</div>
<div class="t cd gn" style="top:240px">94</div>
<svg class="r" style="left:91px;top:247px" width="12" height="8" viewBox="0 0 12 8"><path d="M0.8 0.8 H11.2 L6 7.4 Z" fill="#7A7A7A"/></svg>
<div class="t cd gn" style="top:272px">95</div>
<div class="t cd gn" style="top:304px">96</div>
<div class="t cd gn" style="top:336px">97</div>
<svg class="r" style="left:91px;top:343px" width="12" height="8" viewBox="0 0 12 8"><path d="M0.8 0.8 H11.2 L6 7.4 Z" fill="#7A7A7A"/></svg>
<div class="t cd gn" style="top:368px">98</div>
<div class="t cd gn" style="top:400px">99</div>
<div class="t cd gn" style="top:432px">100</div>
<svg class="r" style="left:91px;top:439px" width="12" height="8" viewBox="0 0 12 8"><path d="M0.8 0.8 H11.2 L6 7.4 Z" fill="#7A7A7A"/></svg>
<div class="t cd gn" style="top:464px">101</div>
<div class="t cd gn" style="top:496px">102</div>
<div class="t cd gn" style="top:528px">103</div>
<div class="t cd gn" style="top:560px">104</div>
<div class="t cd gn" style="top:592px">105</div>
<svg class="r" style="left:91px;top:599px" width="12" height="8" viewBox="0 0 12 8"><path d="M0.8 0.8 H11.2 L6 7.4 Z" fill="#7A7A7A"/></svg>
<div class="t cd gn" style="top:624px">106</div>
<svg class="r" style="left:91px;top:631px" width="12" height="8" viewBox="0 0 12 8"><path d="M0.8 0.8 H11.2 L6 7.4 Z" fill="#7A7A7A"/></svg>
<div class="t cd gn" style="top:656px">107</div>
<div class="t cd gn" style="top:688px">108</div>
<div class="t cd gn" style="top:720px">109</div>
<div class="t cd gn" style="top:752px">110</div>
<svg class="r" style="left:91px;top:759px" width="12" height="8" viewBox="0 0 12 8"><path d="M0.8 0.8 H11.2 L6 7.4 Z" fill="#7A7A7A"/></svg>
<div class="t cd gn" style="top:784px">111</div>
</div>
<svg class="r" style="left:0;top:0" width="2714" height="1434" viewBox="0 0 2714 1434">
<rect x="1486" y="853" width="815" height="290" fill="none" stroke="#EA3E1A" stroke-width="4"/>
<g stroke="#EA401A" stroke-width="4.4" fill="#EA401A" stroke-linecap="butt">
 <path d="M543 585 L325.5 892" fill="none"/>
 <path d="M315 907 L318.3 885.1 L334.6 896.4 Z" stroke="none"/>
 <path d="M1003 585 L785.5 892" fill="none"/>
 <path d="M775 907 L778.3 885.1 L794.6 896.4 Z" stroke="none"/>
 <path d="M993 856 L1371 952.6" fill="none"/>
 <path d="M1388.2 957.2 L1372.1 943.1 L1366.8 962.1 Z" stroke="none"/>
</g>
</svg>
<div class="r" style="left:2698px;top:4px;width:14px;height:1290px;background:#747474;border-radius:7px"></div>
</body></html>
